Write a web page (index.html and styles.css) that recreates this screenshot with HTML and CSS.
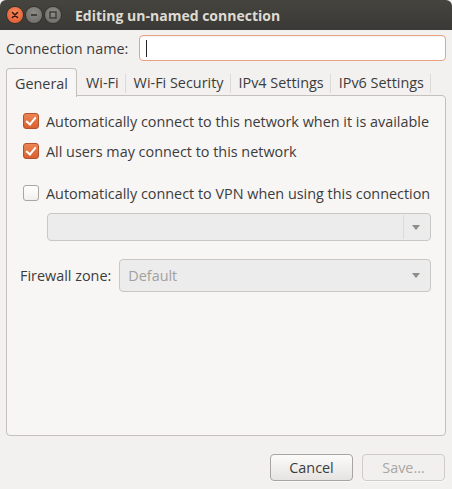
FILE: index.html
```html
<!DOCTYPE html>
<html lang="en">

<head>
    <meta charset="UTF-8">
    <meta name="viewport" content="width=device-width, initial-scale=1.0">
    <title>Editing un-named connection</title>
    <link rel="stylesheet" href="styles.css">
</head>

<body>
    <div class="window">
        <div class="titlebar">
            <div class="controls">
                <span class="ctl close">
                    <svg width="8" height="8" viewBox="0 0 8 8"><path d="M1.5 1.5 L6.5 6.5 M6.5 1.5 L1.5 6.5" stroke="#3a1a10" stroke-width="1.6" stroke-linecap="round" /></svg>
                </span>
                <span class="ctl">
                    <svg width="8" height="8" viewBox="0 0 8 8"><path d="M1 4 H7" stroke="#3c3b37" stroke-width="1.8" /></svg>
                </span>
                <span class="ctl">
                    <svg width="8" height="8" viewBox="0 0 8 8"><rect x="1" y="1" width="6" height="6" fill="none" stroke="#3c3b37" stroke-width="1.4" /></svg>
                </span>
            </div>
            <div class="title">Editing un-named connection</div>
        </div>

        <div class="content">
            <div class="name-row">
                <label class="label">Connection name:</label>
                <div class="entry"><span class="caret"></span></div>
            </div>

            <div class="notebook">
                <div class="tabs">
                    <div class="tab active">General</div>
                    <div class="tab">Wi-Fi</div>
                    <div class="tab">Wi-Fi Security</div>
                    <div class="tab">IPv4 Settings</div>
                    <div class="tab">IPv6 Settings</div>
                </div>
                <div class="page">
                    <div class="check-row">
                        <span class="check on"></span>
                        <span>Automatically connect to this network when it is available</span>
                    </div>
                    <div class="check-row">
                        <span class="check on"></span>
                        <span>All users may connect to this network</span>
                    </div>
                    <div class="check-row vpn">
                        <span class="check"></span>
                        <span>Automatically connect to VPN when using this connection</span>
                    </div>
                    <div class="combo vpn-combo">
                        <span class="combo-text"></span>
                        <span class="combo-sep"></span>
                        <span class="arrow"></span>
                    </div>
                    <div class="zone-row">
                        <span class="label">Firewall zone:</span>
                        <div class="combo zone-combo">
                            <span class="combo-text">Default</span>
                            <span class="arrow"></span>
                        </div>
                    </div>
                </div>
            </div>

            <div class="actions">
                <button class="btn">Cancel</button>
                <button class="btn disabled">Save...</button>
            </div>
        </div>
    </div>
</body>

</html>
```

FILE: styles.css
```css
* {
    margin: 0;
    padding: 0;
    box-sizing: border-box;
}

body {
    width: 452px;
    height: 489px;
    overflow: hidden;
    background: #f2f1f0;
    font-family: "Open Sans", "DejaVu Sans", sans-serif;
    font-size: 14.4px;
    color: #3c3c3c;
}

.window {
    height: 489px;
    display: flex;
    flex-direction: column;
    background: #f2f1f0;
}

/* 标题栏 */
.titlebar {
    height: 30px;
    flex: none;
    display: flex;
    align-items: center;
    background: linear-gradient(#45443f, #3a3935);
    border-radius: 6px 6px 0 0;
    padding-left: 7px;
}

.controls {
    display: flex;
    gap: 3px;
}

.ctl {
    width: 16px;
    height: 16px;
    border-radius: 50%;
    display: flex;
    align-items: center;
    justify-content: center;
    background: radial-gradient(circle at 50% 35%, #8c8b86, #6a6964);
    box-shadow: 0 0 0 1px #34332f;
}

.ctl.close {
    background: radial-gradient(circle at 50% 35%, #f78a5e, #e0542a);
}

.title {
    margin-left: 14px;
    color: #dfdbd2;
    font-weight: bold;
    font-size: 14px;
}

.content {
    flex: 1;
    display: flex;
    flex-direction: column;
    padding: 5px 6px 8px 6px;
}

.name-row {
    display: flex;
    align-items: center;
    height: 26px;
}

.label {
    color: #3c3c3c;
}

.entry {
    margin-left: auto;
    width: 307px;
    height: 26px;
    background: #fff;
    border: 1px solid #e8a383;
    border-radius: 4px;
    box-shadow: inset 0 1px 1px rgba(0, 0, 0, .06);
    padding: 4px 6px;
}

.caret {
    display: block;
    width: 1px;
    height: 17px;
    background: #222;
}

/* 标签页 */
.notebook {
    margin-top: 7px;
    display: flex;
    flex-direction: column;
}

.tabs {
    display: flex;
    height: 28px;
    position: relative;
    z-index: 1;
}

.tab {
    display: flex;
    align-items: center;
    height: 28px;
    padding: 0 7px 0 8px;
    position: relative;
}

.tab::after {
    content: "";
    position: absolute;
    right: 0;
    top: 6px;
    bottom: 3px;
    width: 1px;
    background: #dcdad6;
}

.tab.active {
    padding: 0 8px;
    background: #f7f6f5;
    border: 1px solid #c4c1bc;
    border-bottom: none;
    border-radius: 4px 4px 0 0;
    height: 29px;
    margin-right: 1px;
}

.tab.active::after {
    display: none;
}

.page {
    height: 341px;
    margin-top: -1px;
    background: #f7f6f5;
    border: 1px solid #c4c1bc;
    border-radius: 0 4px 4px 4px;
    padding: 17px 14px 0 16px;
}

.check-row {
    display: flex;
    align-items: center;
    height: 16px;
    margin-bottom: 14px;
}

.check-row.vpn {
    margin-top: 26px;
    margin-bottom: 12px;
}

.check {
    width: 16px;
    height: 16px;
    flex: none;
    margin-right: 7px;
    border: 1px solid #aaa7a2;
    border-radius: 3px;
    background: linear-gradient(#ffffff, #f1f0ee);
    position: relative;
}

.check.on {
    border-color: #b4502a;
    background: linear-gradient(#ee8554, #d8602f);
}

.check.on::after {
    content: "";
    position: absolute;
    left: 4px;
    top: 1px;
    width: 4px;
    height: 8px;
    border-right: 2px solid #fff;
    border-bottom: 2px solid #fff;
    transform: rotate(40deg);
}

/* 下拉框 */
.combo {
    display: flex;
    align-items: center;
    background: #ececec;
    border: 1px solid #c9c7c4;
    border-radius: 4px;
    padding: 0 10px 0 8px;
}

.vpn-combo {
    height: 28px;
    margin-left: 24px;
}

.combo-text {
    flex: 1;
    color: #a3a19e;
}

.combo-sep {
    width: 1px;
    height: 24px;
    background: #dcdad6;
    margin-right: 8px;
}

.arrow {
    width: 0;
    height: 0;
    border-left: 4px solid transparent;
    border-right: 4px solid transparent;
    border-top: 5px solid #8e8d8a;
}

.zone-row {
    display: flex;
    align-items: center;
    margin-top: 18px;
    margin-left: -3px;
}

.zone-row .label {
    margin-right: 8px;
}

.zone-combo {
    flex: 1;
    height: 33px;
}

.actions {
    margin-top: auto;
    display: flex;
    justify-content: flex-end;
    gap: 9px;
    padding-right: 1px;
}

.btn {
    width: 83px;
    height: 27px;
    font-family: inherit;
    font-size: 14.4px;
    color: #3c3c3c;
    border: 1px solid #a8a5a0;
    border-radius: 4px;
    background: linear-gradient(#fbfbfa, #e6e4e1);
    box-shadow: 0 1px 0 rgba(255, 255, 255, .6);
}

.btn.disabled {
    color: #a9a7a3;
    border-color: #cfccc8;
    background: #f1f0ee;
}
```
